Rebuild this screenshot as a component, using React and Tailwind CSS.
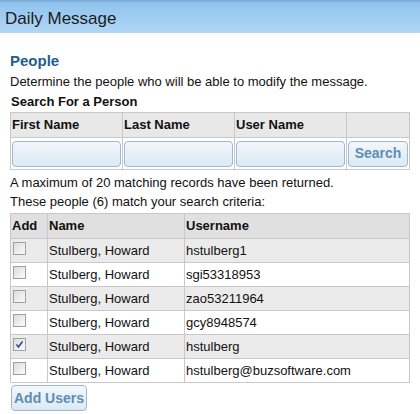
import React, { useState } from "react";

const people = [
    { name: "Stulberg, Howard", username: "hstulberg1", checked: false },
    { name: "Stulberg, Howard", username: "sgi53318953", checked: false },
    { name: "Stulberg, Howard", username: "zao53211964", checked: false },
    { name: "Stulberg, Howard", username: "gcy8948574", checked: false },
    { name: "Stulberg, Howard", username: "hstulberg", checked: true },
    { name: "Stulberg, Howard", username: "hstulberg@buzsoftware.com", checked: false },
];

const Checkbox = ({ checked, onChange }) => (
    <button
        onClick={onChange}
        className="w-[13px] h-[13px] border border-[#a0a0a0] bg-gradient-to-br from-[#dcdcdc] to-[#fbfbfb] flex items-center justify-center"
    >
        {checked && (
            <svg width="9" height="9" viewBox="0 0 9 9">
                <path d="M1.5 4.5 L3.5 7 L7.5 1.5" stroke="#2c4d8a" strokeWidth="1.6" fill="none" />
            </svg>
        )}
    </button>
);

const App = () => {
    const [rows, setRows] = useState(people);

    const toggle = (i) => {
        setRows(rows.map((r, idx) => (idx === i ? { ...r, checked: !r.checked } : r)));
    };

    return (
        <div className="w-[420px] h-[414px] bg-white text-[13px] text-[#111] font-['Liberation_Sans',Arial,sans-serif]">
            {/* Title bar */}
            <div className="h-[33px] border-t-2 border-[#7fb0dc] bg-gradient-to-b from-[#8ec3ee] to-[#b2d7f5] pl-[5px] pt-[2px] flex items-center">
                <span className="text-[17px] text-[#1b1b1b] leading-none">Daily Message</span>
            </div>

            <div className="px-[10px]">
                <div className="pt-[19px] text-[15px] font-bold text-[#1f5e8e] leading-[18px]">People</div>
                <div className="mt-[4px] leading-[16px]">Determine the people who will be able to modify the message.</div>
                <div className="mt-[4px] font-bold leading-[16px] pl-[1px]">Search For a Person</div>

                {/* Search table */}
                <table className="mt-[2px] w-[400px] border-collapse table-fixed">
                    <thead>
                        <tr className="h-[25px] bg-[#e8e8e8]">
                            <th className="w-[112px] border border-[#c8c8c8] text-left font-bold pl-[1px]">First Name</th>
                            <th className="w-[112px] border border-[#c8c8c8] text-left font-bold pl-[1px]">Last Name</th>
                            <th className="w-[112px] border border-[#c8c8c8] text-left font-bold pl-[1px]">User Name</th>
                            <th className="border border-[#c8c8c8]"></th>
                        </tr>
                    </thead>
                    <tbody>
                        <tr className="h-[32px]">
                            {[0, 1, 2].map((i) => (
                                <td key={i} className="border border-[#c8c8c8] p-[1px]">
                                    <input className="w-full h-[26px] rounded-[4px] border border-[#9fb8cc] bg-gradient-to-b from-[#f1f7fc] to-[#dce9f4] outline-none" />
                                </td>
                            ))}
                            <td className="border border-[#c8c8c8] p-[1px]">
                                <button className="w-full h-[26px] rounded-[4px] border border-[#9fb8cc] bg-gradient-to-b from-[#f1f7fc] to-[#dce9f4] text-[#5f8db5] font-bold text-[14px]">
                                    Search
                                </button>
                            </td>
                        </tr>
                    </tbody>
                </table>

                <div className="mt-[3px] leading-[19px]">A maximum of 20 matching records have been returned.</div>
                <div className="leading-[20px]">These people (6) match your search criteria:</div>

                {/* Results table */}
                <table className="mt-[1px] w-[400px] border-collapse table-fixed">
                    <thead>
                        <tr className="h-[25px] bg-[#e0e0e0]">
                            <th className="w-[37px] border border-[#c8c8c8] text-left font-bold pl-[1px]">Add</th>
                            <th className="w-[137px] border border-[#c8c8c8] text-left font-bold pl-[1px]">Name</th>
                            <th className="border border-[#c8c8c8] text-left font-bold pl-[1px]">Username</th>
                        </tr>
                    </thead>
                    <tbody>
                        {rows.map((r, i) => (
                            <tr key={i} className={`h-[24px] ${i % 2 === 0 ? "bg-[#ebebeb]" : "bg-white"}`}>
                                <td className="border border-[#c8c8c8] pl-[2px] align-top pt-[3px]">
                                    <Checkbox checked={r.checked} onChange={() => toggle(i)} />
                                </td>
                                <td className="border border-[#c8c8c8] pl-[1px]">{r.name}</td>
                                <td className="border border-[#c8c8c8] pl-[1px]">{r.username}</td>
                            </tr>
                        ))}
                    </tbody>
                </table>

                <button className="mt-[2px] ml-[1px] w-[76px] h-[26px] rounded-[4px] border border-[#9fb8cc] bg-gradient-to-b from-[#f1f7fc] to-[#dce9f4] text-[#5f8db5] font-bold text-[14px]">
                    Add Users
                </button>
            </div>
        </div>
    );
};

export default App;
